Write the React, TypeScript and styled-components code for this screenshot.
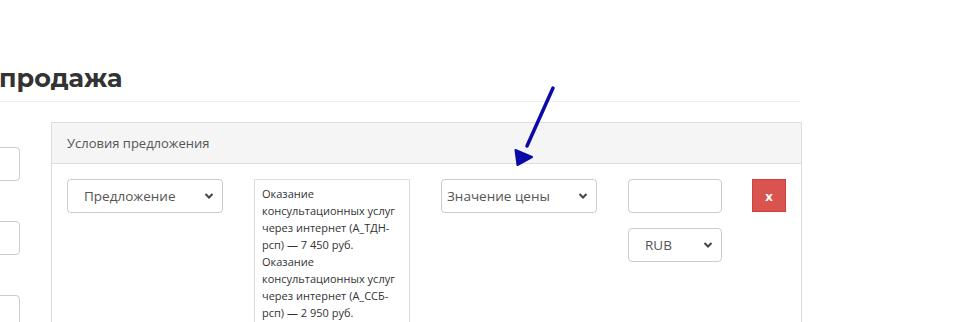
import React from 'react';
import styled, { createGlobalStyle } from 'styled-components';

const Global = createGlobalStyle`
  body {
    margin: 0;
    font-family: "Open Sans", "Liberation Sans", sans-serif;
    color: #333;
    background: #fff;
    overflow: hidden;
  }
`;

const Page = styled.div`
  position: relative;
  width: 800px;
  padding-top: 61px;
`;

const Title = styled.h1`
  margin: 0 0 20px -1px;
  padding-bottom: 6px;
  font-family: "Montserrat", "Open Sans", "Liberation Sans", sans-serif;
  font-size: 25.5px;
  font-weight: 700;
  color: #333;
  line-height: 34px;
  border-bottom: 1px solid #eee;
`;

const Row = styled.div`
  display: flex;
  gap: 31px;
  align-items: flex-start;
`;

const LeftCol = styled.div`
  flex-shrink: 0;
  width: 150px;
  margin-left: -130px;
  padding-top: 25px;
  display: flex;
  flex-direction: column;
  gap: 40px;
`;

const Field = styled.div`
  height: 32px;
  border: 1px solid #ccc;
  border-radius: 4px;
  background: #fff;
`;

const Panel = styled.div`
  flex: 1;
  border: 1px solid #ddd;
  min-height: 260px;
`;

const PanelHeader = styled.div`
  background: #f5f5f5;
  border-bottom: 1px solid #ddd;
  height: 40px;
  padding: 0 15px;
  display: flex;
  align-items: center;
  font-size: 13px;
  color: #555;
`;

const PanelBody = styled.div`
  padding: 15px;
  display: grid;
  grid-template-columns: 156px 156px 156px 94px 33px;
  column-gap: 31px;
  align-items: start;
`;

const Stack = styled.div`
  display: flex;
  flex-direction: column;
  gap: 15px;
`;

const SelectBox = styled.div<{ $pad: number }>`
  height: 32px;
  border: 1px solid #ccc;
  border-radius: 4px;
  background: #fff;
  display: flex;
  align-items: center;
  justify-content: space-between;
  padding: 0 8px 0 ${p => p.$pad}px;
  font-size: 13.5px;
  color: #555;
`;

const Chevron = () => (
  <svg width="10" height="8" viewBox="0 0 10 8">
    <path d="M1.5 2 L5 5.5 L8.5 2" fill="none" stroke="#444" strokeWidth="2" />
  </svg>
);

const TextArea = styled.div`
  border: 1px solid #ddd;
  padding: 5px 7px;
  font-size: 11px;
  line-height: 17px;
  color: #333;
  min-height: 160px;
`;

const Input = styled.div`
  height: 32px;
  border: 1px solid #ccc;
  border-radius: 4px;
  background: #fff;
`;

const RemoveBtn = styled.div`
  margin-left: -1px;
  height: 33px;
  background: #d9534f;
  border: 1px solid #d43f3a;
  box-sizing: border-box;
  color: #fff;
  font-size: 13px;
  font-weight: 700;
  display: flex;
  align-items: center;
  justify-content: center;
`;

const Arrow = styled.svg`
  position: absolute;
  left: 505px;
  top: 80px;
`;

const Select = ({ label, pad }: { label: string; pad: number }) => (
  <SelectBox $pad={pad}>
    <span>{label}</span>
    <Chevron />
  </SelectBox>
);

export default function App() {
  return (
    <>
      <Global />
      <Page>
        <Title>продажа</Title>
        <Row>
          <LeftCol>
            <Field />
            <Field />
            <Field />
          </LeftCol>
          <Panel>
            <PanelHeader>Условия предложения</PanelHeader>
            <PanelBody>
              <Select label="Предложение" pad={16} />
              <TextArea>
                Оказание консультационных услуг через интернет (А_ТДН-рсп) — 7 450 руб.
                <br />
                Оказание консультационных услуг через интернет (А_ССБ-рсп) — 2 950 руб.
              </TextArea>
              <Select label="Значение цены" pad={5} />
              <Stack>
                <Input />
                <Select label="RUB" pad={16} />
              </Stack>
              <RemoveBtn>x</RemoveBtn>
            </PanelBody>
          </Panel>
        </Row>
        <Arrow width="60" height="95" viewBox="0 0 60 95">
          <line x1="48" y1="8" x2="22" y2="66" stroke="#0a0aa8" strokeWidth="3.5" strokeLinecap="round" />
          <polygon points="12.5,85 10.5,70 27,77" fill="#0a0aa8" stroke="#0a0aa8" strokeWidth="2" strokeLinejoin="round" />
        </Arrow>
      </Page>
    </>
  );
}
